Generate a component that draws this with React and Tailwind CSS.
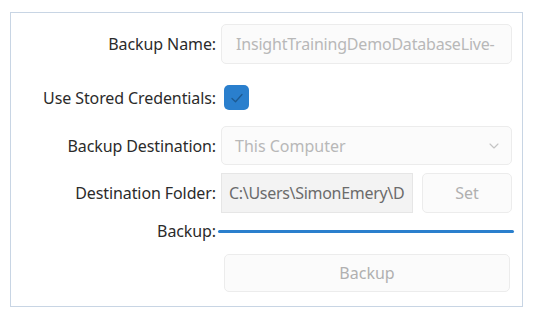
import React from 'react';

const font = { fontFamily: '"Noto Sans", "Open Sans", sans-serif' };

const Label = ({ children }) => (
  <div className="w-[205px] shrink-0 text-right text-[16px] leading-none text-[#2b2b2b] tracking-[-0.1px]">{children}</div>
);

const App = () => {
  return (
    <div className="w-[536px] h-[317px] bg-white pt-[12px] pl-[10px]" style={font}>
      <div className="w-[513px] h-[295px] border border-[#c8d5e4] pt-[11px]">
        {/* Backup Name */}
        <div className="flex items-center h-[40px]">
          <Label>Backup Name:</Label>
          <div className="ml-[5px] w-[291px] h-[40px] rounded-[5px] border border-[#ececec] bg-[#fbfbfb] flex items-center pl-[14px] overflow-hidden whitespace-nowrap text-[16px] text-[#b8b8b8] tracking-[-0.2px]">
            InsightTrainingDemoDatabaseLive-
          </div>
        </div>

        {/* Use Stored Credentials */}
        <div className="flex items-center h-[25px] mt-[21px]">
          <Label>Use Stored Credentials:</Label>
          <div className="ml-[8px] w-[25px] h-[25px] rounded-[5px] bg-[#2a7fcd] flex items-center justify-center">
            <svg width="14" height="12" viewBox="0 0 14 12" fill="none">
              <path d="M2 6.5 L5.5 9.8 L12 2.5" stroke="#1d5a91" strokeWidth="1.3" strokeLinecap="round" strokeLinejoin="round" />
            </svg>
          </div>
        </div>

        {/* Backup Destination */}
        <div className="flex items-center h-[39px] mt-[16px]">
          <Label>Backup Destination:</Label>
          <div className="ml-[5px] w-[291px] h-[39px] rounded-[5px] border border-[#ececec] bg-[#fbfbfb] flex items-center justify-between pl-[13px] pr-[12px] text-[16px] text-[#b8b8b8]">
            <span>This Computer</span>
            <svg width="10" height="6" viewBox="0 0 10 6" fill="none">
              <path d="M1 1 L5 5 L9 1" stroke="#c4c4c4" strokeWidth="1.1" strokeLinecap="round" strokeLinejoin="round" />
            </svg>
          </div>
        </div>

        {/* Destination Folder */}
        <div className="flex items-center h-[40px] mt-[8px]">
          <Label>Destination Folder:</Label>
          <div className="ml-[5px] w-[192px] h-[40px] border border-[#e6e6e6] bg-[#f3f3f3] flex items-center pl-[7px] overflow-hidden whitespace-nowrap text-[16px] text-[#6b6b6b] tracking-[-0.3px]">
            C:\Users\SimonEmery\D
          </div>
          <div className="ml-[9px] w-[90px] h-[40px] rounded-[5px] border border-[#ececec] bg-[#fbfbfb] flex items-center justify-center text-[16px] text-[#b0b0b0]">
            Set
          </div>
        </div>

        {/* Backup progress */}
        <div className="flex items-center h-[20px] mt-[8px]">
          <Label>Backup:</Label>
          <div className="ml-[2px] w-[296px] h-[3px] rounded-full bg-[#2a7fcd]" />
        </div>

        {/* Backup button */}
        <div className="flex mt-[13px]">
          <div className="w-[205px] shrink-0" />
          <div className="ml-[8px] w-[286px] h-[38px] rounded-[5px] border border-[#ececec] bg-[#fbfbfb] flex items-center justify-center text-[16px] text-[#b0b0b0]">
            Backup
          </div>
        </div>
      </div>
    </div>
  );
};

export default App;
